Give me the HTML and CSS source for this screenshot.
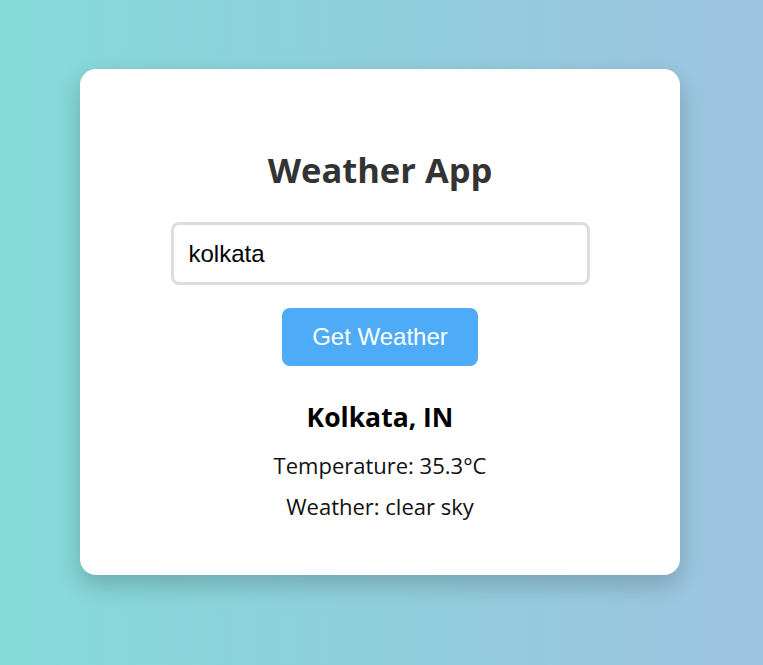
FILE: index.html
```html
<!DOCTYPE html>
<html lang="en">
<head>
<meta charset="utf-8">
<title>Weather App</title>
<link rel="stylesheet" href="styles.css">
</head>
<body>
<main class="card">
  <h1 class="title">Weather App</h1>
  <input class="city-input" type="text" value="kolkata">
  <button class="btn">Get Weather</button>
  <section class="result">
    <h2 class="city">Kolkata, IN</h2>
    <p class="line">Temperature: 35.3°C</p>
    <p class="line">Weather: clear sky</p>
  </section>
</main>
</body>
</html>
```
FILE: styles.css
```css
html, body {
  margin: 0;
  height: 100%;
}
body {
  background: linear-gradient(to right, #84dad9, #9dc4e0);
  font-family: "Open Sans", "Noto Sans", sans-serif;
  display: flex;
  justify-content: center;
  align-items: flex-start;
  box-sizing: border-box;
  padding: 69px 3px 0 0;
}
.card {
  width: 600px;
  height: 506px;
  box-sizing: border-box;
  background: #fff;
  border-radius: 16px;
  box-shadow: 0 10px 25px rgba(0, 0, 0, 0.2);
  padding: 81px 40px 40px;
  display: flex;
  flex-direction: column;
  align-items: center;
}
.title {
  margin: 0 0 32px;
  font-size: 34.5px;
  line-height: 40px;
  font-weight: 700;
  color: #333;
}
.city-input {
  width: 419px;
  height: 63px;
  box-sizing: border-box;
  border: 3px solid #ddd;
  border-radius: 8px;
  padding: 0 15px;
  font-family: "Liberation Sans", Arial, sans-serif;
  font-size: 24px;
  color: #000;
  outline: none;
}
.btn {
  margin-top: 23px;
  width: 196px;
  height: 58px;
  border: none;
  border-radius: 8px;
  background: #4dabf7;
  color: #fff;
  font-family: "Liberation Sans", Arial, sans-serif;
  font-size: 24px;
}
.result {
  margin-top: 34px;
  display: flex;
  flex-direction: column;
  align-items: center;
}
.city {
  margin: 0 0 11px;
  font-size: 26.5px;
  line-height: 34px;
  font-weight: 700;
  color: #000;
}
.line {
  margin: 0;
  font-size: 22px;
  line-height: 41px;
  color: #111;
}
```
